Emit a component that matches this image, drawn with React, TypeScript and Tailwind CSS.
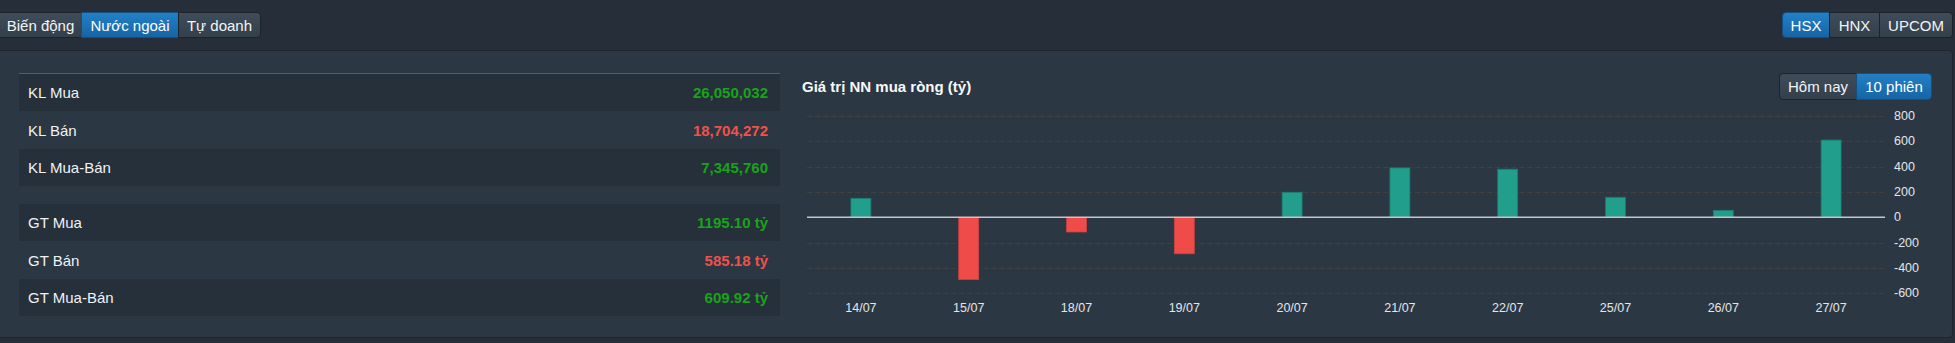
import React from "react";

const grayBtn =
  "h-full flex items-center justify-center text-[#f2f4f6] bg-gradient-to-b from-[#3f4c59] to-[#33404c] border border-[#1c232a]";
const blueBtn =
  "h-full flex items-center justify-center text-white bg-gradient-to-b from-[#2380c6] to-[#1565a6] border border-[#13507f]";

type Row = { label: string; value: string; color: "g" | "r" };

const kl: Row[] = [
  { label: "KL Mua", value: "26,050,032", color: "g" },
  { label: "KL Bán", value: "18,704,272", color: "r" },
  { label: "KL Mua-Bán", value: "7,345,760", color: "g" },
];
const gt: Row[] = [
  { label: "GT Mua", value: "1195.10 tỷ", color: "g" },
  { label: "GT Bán", value: "585.18 tỷ", color: "r" },
  { label: "GT Mua-Bán", value: "609.92 tỷ", color: "g" },
];

function Table({ rows, line }: { rows: Row[]; line?: boolean }) {
  return (
    <div className={line ? "border-t border-[#525d67]" : ""}>
      {rows.map((r, i) => (
        <div
          key={r.label}
          className={
            "flex items-center justify-between pl-[9px] pr-[12px] " +
            (i === 1 ? "h-[38px] bg-transparent" : "h-[37px] bg-[#26303b]")
          }
        >
          <span className="text-[#f0f2f4]">{r.label}</span>
          <span
            className={
              "font-bold " + (r.color === "g" ? "text-[#19a319]" : "text-[#f0514a]")
            }
          >
            {r.value}
          </span>
        </div>
      ))}
    </div>
  );
}

const cats = ["14/07", "15/07", "18/07", "19/07", "20/07", "21/07", "22/07", "25/07", "26/07", "27/07"];
const vals = [150, -492, -116, -288, 198, 390, 380, 158, 55, 610];

function Chart() {
  // svg origin: x_abs - 780, y_abs - 100
  const x0 = 807 - 780;
  const x1 = 1885 - 780;
  const zeroY = 217.3 - 100;
  const k = 25.33 / 200;
  const yOf = (v: number) => zeroY - v * k;
  const step = (x1 - x0) / 10;
  const ticks = [800, 600, 400, 200, 0, -200, -400, -600];
  return (
    <svg width={1171} height={225} className="block">
      {ticks
        .filter((t) => t !== 0)
        .map((t) => (
          <line
            key={t}
            x1={x0}
            x2={x1}
            y1={Math.round(yOf(t)) + 0.5}
            y2={Math.round(yOf(t)) + 0.5}
            stroke="#433f3c"
            strokeWidth={1}
            strokeDasharray="5 3"
          />
        ))}
      {vals.map((v, i) => {
        const cx = x0 + step * (i + 0.5);
        const top = v >= 0 ? yOf(v) : zeroY;
        const h = Math.abs(v) * k;
        return (
          <rect
            key={i}
            x={cx - 10}
            y={top}
            width={20}
            height={h}
            fill={v >= 0 ? "#229e8c" : "#ef4b48"}
            stroke={v >= 0 ? "#1a7b6d" : "#c94240"}
            strokeWidth={0.8}
          />
        );
      })}
      <line x1={x0} x2={x1} y1={zeroY} y2={zeroY} stroke="#c4c6c8" strokeWidth={1.5} />
      {ticks.map((t) => (
        <text
          key={t}
          x={1894 - 780}
          y={yOf(t)}
          dominantBaseline="central"
          fill="#e4e6e8"
          fontSize={12.5}
          fontFamily="'Liberation Sans', Arial, sans-serif"
        >
          {t}
        </text>
      ))}
      {cats.map((c, i) => (
        <text
          key={c}
          x={x0 + step * (i + 0.5)}
          y={308 - 100}
          textAnchor="middle"
          dominantBaseline="central"
          fill="#e4e6e8"
          fontSize={12.5}
          fontFamily="'Liberation Sans', Arial, sans-serif"
        >
          {c}
        </text>
      ))}
    </svg>
  );
}

export default function App() {
  return (
    <div className="w-[1955px] h-[343px] overflow-hidden bg-[#252e39] font-['Liberation_Sans',Arial,sans-serif] text-[15px] leading-none">
      <div className="h-[50px] flex items-start justify-between pt-[12px] pr-[2px]">
        <div className="flex h-[26px]">
          <div className={grayBtn + " w-[83px] rounded-r-none -ml-[1px]"}>Biến động</div>
          <div className={blueBtn + " w-[98px] -ml-[1px]"}>Nước ngoài</div>
          <div className={grayBtn + " w-[83px] rounded-r-[4px] -ml-[1px]"}>Tự doanh</div>
        </div>
        <div className="flex h-[26px]">
          <div className={blueBtn + " w-[48px] rounded-l-[4px]"}>HSX</div>
          <div className={grayBtn + " w-[51px] -ml-[1px]"}>HNX</div>
          <div className={grayBtn + " w-[74px] rounded-r-[4px] -ml-[1px]"}>UPCOM</div>
        </div>
      </div>
      <div className="h-[288px] mr-[2px] -ml-[1px] bg-[#2b3743] border border-[#1e262e] rounded-r-[4px] flex">
        <div className="w-[780px] pl-[19px] pt-[22px] flex flex-col gap-[18px]">
          <Table rows={kl} line />
          <Table rows={gt} />
        </div>
        <div className="flex-1 flex flex-col">
          <div className="flex items-center justify-between mt-[22px] pl-[22px] pr-[20px] h-[27px]">
            <span className="font-bold text-[#f7f8f9]">Giá trị NN mua ròng (tỷ)</span>
            <div className="flex h-[27px]">
              <div className={grayBtn + " w-[78px] rounded-l-[4px]"}>Hôm nay</div>
              <div className={blueBtn + " w-[76px] rounded-r-[4px] -ml-[1px]"}>10 phiên</div>
            </div>
          </div>
          <Chart />
        </div>
      </div>
    </div>
  );
}
